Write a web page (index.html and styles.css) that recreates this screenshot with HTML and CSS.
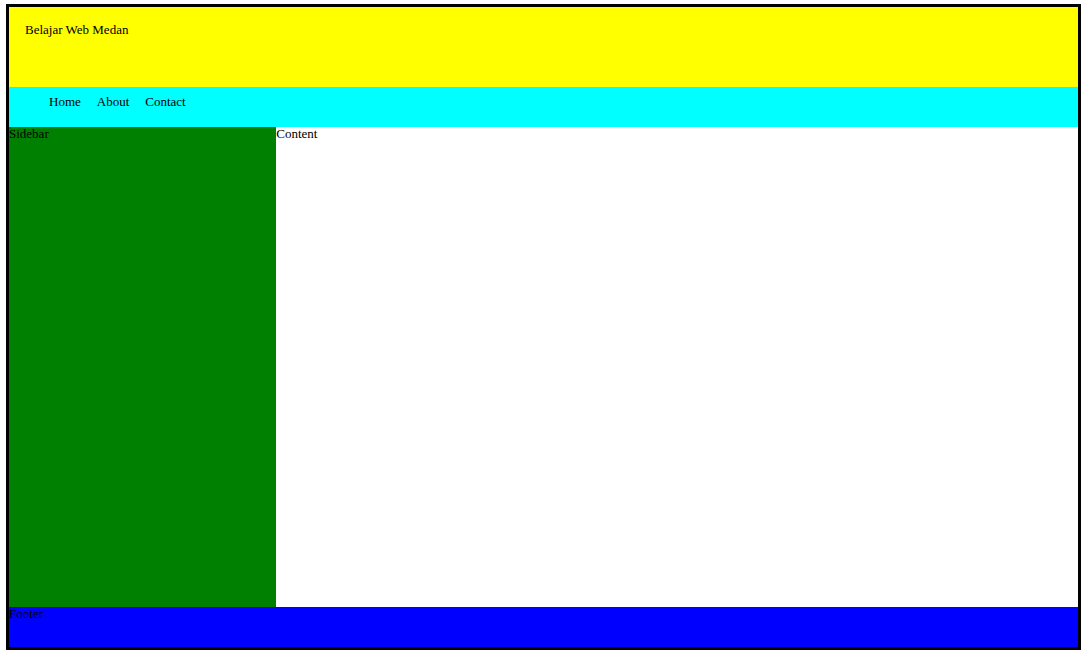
FILE: index.html
```
<!DOCTYPE html>
<html lang="id">
<head>
    <meta charset="UTF-8">
    <meta name="viewport" content="width=device-width, initial-scale=1.0">
    <title>Belajar Web Medan</title>
    <link rel="stylesheet" href="styles.css">
</head>
<body>
    <div class="container">
        <header class="header">Belajar Web Medan</header>
        <nav class="navbar">
            <ul class="menu">
                <li><a href="#">Home</a></li>
                <li><a href="#">About</a></li>
                <li><a href="#">Contact</a></li>
            </ul>
        </nav>
        <div class="main">
            <aside class="sidebar">Sidebar</aside>
            <main class="content">Content</main>
        </div>
        <footer class="footer">Footer</footer>
    </div>
</body>
</html>
```

FILE: styles.css
```
* {
    box-sizing: border-box;
}

body {
    margin: 4px 5px 4px 6px;
    font-family: "Liberation Serif", "Times New Roman", serif;
    font-size: 13px;
    line-height: 13px;
    color: black;
}

.container {
    border: 3px solid black;
}

/* Header */
.header {
    min-height: 80px;
    padding: 16px;
    background: yellow;
}

/* Navbar */
.navbar {
    min-height: 40px;
    background: aqua;
}

.menu {
    display: flex;
    gap: 16px;
    margin: 0;
    padding: 8px 0 0 40px;
    list-style: none;
}

.menu a {
    color: black;
    text-decoration: none;
}

/* Sidebar + Content */
.main {
    display: flex;
    min-height: 480px;
}

.sidebar {
    width: 25%;
    background: green;
}

.content {
    width: 75%;
    background: white;
}

/* Footer */
.footer {
    min-height: 40px;
    background: blue;
}
```
